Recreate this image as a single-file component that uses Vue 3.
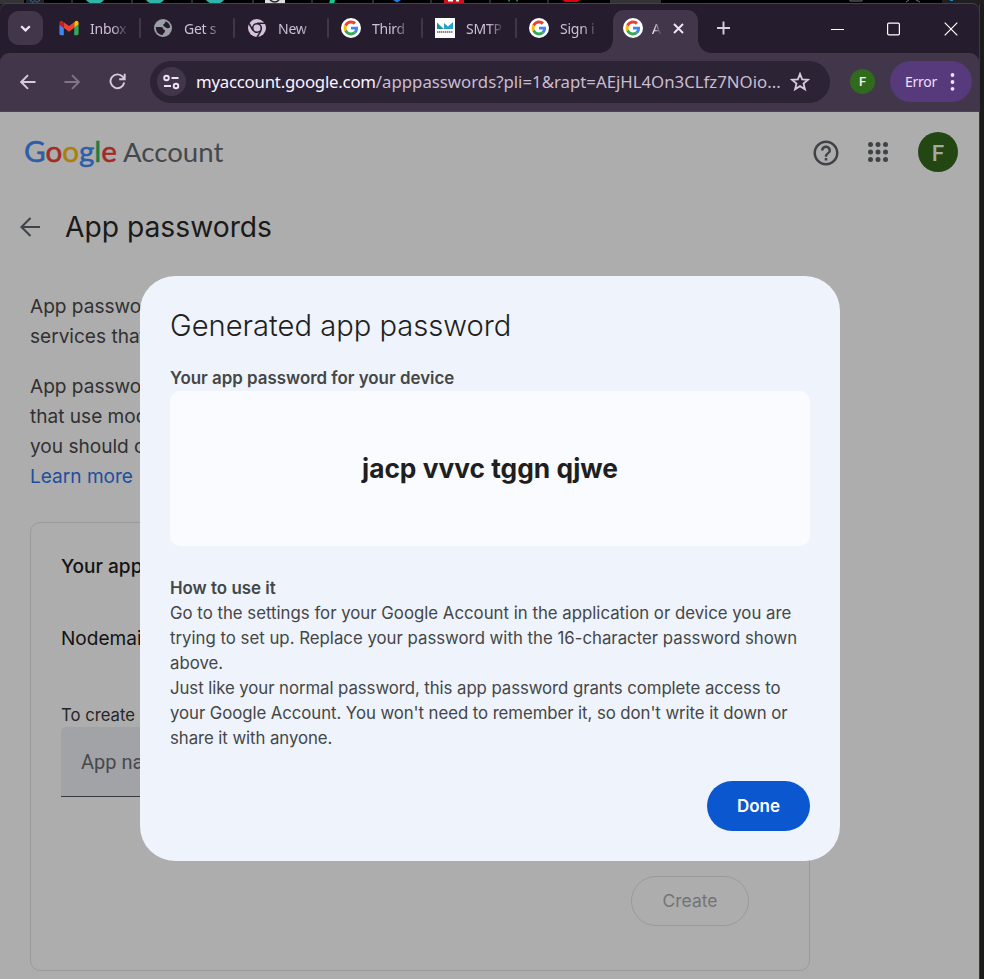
<script setup>
const tabs = [
  { icon: 'gmail', title: 'Inbox' },
  { icon: 'globe', title: 'Get s' },
  { icon: 'chrome', title: 'New' },
  { icon: 'google', title: 'Third' },
  { icon: 'nodemailer', title: 'SMTP' },
  { icon: 'google', title: 'Sign i' },
]
const spokes = [0, 120, 240]
const separators = [71, 131, 191, 252, 311, 372, 430, 489, 547]
const teal = [95, 155, 215]
const dots = [0, 1, 2, 3, 4, 5, 6, 7, 8]
const logo = [
  ['G', 'blue'], ['o', 'red'], ['o', 'yellow'], ['g', 'blue'], ['l', 'green'], ['e', 'red'],
]
</script>

<template>
  <div class="desktop">
    <svg class="behind" width="984" height="4" viewBox="0 0 984 4">
      <rect width="984" height="4" fill="#000" />
      <rect width="24" height="4" fill="#343434" />
      <rect x="26" width="18" height="4" fill="#20232a" />
      <path d="M30 0l3 2.500 2-2 2 2 3-2.500" stroke="#39768d" fill="none" />
      <rect v-for="x in separators" :key="x" :x="x" width="2" height="4" fill="#2b2b2b" />
      <path v-for="x in teal" :key="x" :d="`M${x - 9} 0h18q-3 4-9 4t-9-4z`" fill="#2fb5a8" />
      <rect x="265" width="20" height="4" fill="#ddd" />
      <path d="M270 0q5 4 9 0" stroke="#222" fill="none" stroke-width="1.500" />
      <path d="M330 0h5l-1 4h-5z" fill="#16c98d" />
      <path d="M393 0h8l-4 2.500z" fill="#1d7fe0" />
      <rect x="444" width="20" height="4" fill="#d0121b" />
      <rect x="448" width="5" height="1.500" fill="#fff" /><rect x="456" width="3" height="1.500" fill="#fff" />
      <rect x="508" width="2" height="1.500" fill="#167a4d" /><rect x="516" width="2" height="1.500" fill="#167a4d" />
      <path d="M562 0h18l-3 2h-12z" fill="#e3000b" />
      <rect x="610" width="51" height="4" fill="#343434" />
      <path d="M850 0v1h12v-1" stroke="#777" fill="none" />
      <path d="M906 2l3-2M916 0l4 2" stroke="#777" />
      <rect x="942" width="42" height="4" fill="#1f1f1f" />
      <rect x="950" width="3" height="1" fill="#2783c4" />
    </svg>

    <div class="body">
      <div class="window">
        <div class="tabstrip">
          <button class="tabsearch">
            <svg width="13" height="9" viewBox="0 0 13 9"><path d="M2.200 2.200l4.300 4.200 4.300-4.200" fill="none" stroke="#f0e6f5" stroke-width="2.200" /></svg>
          </button>
          <div v-for="(t, i) in tabs" :key="i" class="tab">
            <svg v-if="t.icon === 'gmail'" class="fav" viewBox="50 40 92 70">
              <path fill="#4285f4" d="M58 108h14V74L52 59v43c0 3.320 2.690 6 6 6" />
              <path fill="#34a853" d="M120 108h14c3.320 0 6-2.690 6-6V59l-20 15" />
              <path fill="#fbbc04" d="M120 48v26l20-15v-8c0-7.420-8.470-11.650-14.400-7.200" />
              <path fill="#ea4335" d="M72 74V48l24 18 24-18v26L96 92" />
              <path fill="#c5221f" d="M52 51v8l20 15V48l-5.600-4.200c-5.940-4.450-14.400-.220-14.400 7.200" />
            </svg>
            <svg v-else-if="t.icon === 'globe'" class="fav" viewBox="0 0 20 20">
              <circle cx="10" cy="10" r="9" fill="#9aa0a6" />
              <path fill="#251c2d" d="M12.500 3.200c2.600 1 4.400 3.200 4.700 6-1.500 1.300-3.400 1.400-4.400.300-.900-1-2.300-.800-2.500-2.300-.200-1.500 2.200-1.300 2.200-4zM2.900 9h4.800c2 0 2.700 1.300 2.700 2.600 1.600 0 2 .900 1.400 2.300-.500 1.200-1.900 1.200-2 3.100-4 .300-7.300-3.500-6.900-8z" />
            </svg>
            <svg v-else-if="t.icon === 'chrome'" class="fav" viewBox="0 0 20 20">
              <circle cx="10" cy="10" r="9" fill="#d5c3dc" />
              <g v-for="a in spokes" :key="a" :transform="`rotate(${a} 10 10)`">
                <path d="M10 5.300H18.500" stroke="#251c2d" stroke-width="1.500" />
              </g>
              <circle cx="10" cy="10" r="4.300" fill="#d5c3dc" stroke="#251c2d" stroke-width="1.600" />
            </svg>
            <svg v-else-if="t.icon === 'nodemailer'" class="fav" viewBox="0 0 20 20">
              <rect width="20" height="20" fill="#fff" />
              <path d="M2 4.500l7 6.500H2z" fill="#2aa58c" /><path d="M9 11V5l4 3.500L18 4v7z" fill="#2b9fd0" />
              <path d="M2 11V6l5 5z" fill="#1f8f9b" />
              <path d="M2 14h16" stroke="#666" stroke-width="1.300" stroke-dasharray="1.500 .500" />
            </svg>
            <svg v-else class="fav" viewBox="0 0 20 20">
              <circle cx="10" cy="10" r="10" fill="#fff" />
              <g transform="translate(2.600 2.600) scale(.308)">
                <path fill="#EA4335" d="M24 9.500c3.540 0 6.710 1.220 9.210 3.600l6.850-6.850C35.900 2.380 30.470 0 24 0 14.620 0 6.510 5.380 2.560 13.220l7.980 6.190C12.430 13.720 17.740 9.500 24 9.500z" />
                <path fill="#4285F4" d="M46.980 24.550c0-1.570-.15-3.090-.38-4.550H24v9.020h12.940c-.58 2.960-2.260 5.480-4.780 7.180l7.730 6c4.510-4.180 7.090-10.360 7.090-17.650z" />
                <path fill="#FBBC05" d="M10.530 28.590c-.48-1.450-.76-2.990-.76-4.590s.27-3.140.76-4.590l-7.980-6.190C.92 16.460 0 20.120 0 24c0 3.880.92 7.540 2.560 10.780l7.970-6.190z" />
                <path fill="#34A853" d="M24 48c6.480 0 11.930-2.130 15.890-5.810l-7.730-6c-2.150 1.450-4.920 2.300-8.160 2.300-6.260 0-11.570-4.220-13.470-9.910l-7.980 6.190C6.510 42.620 14.620 48 24 48z" />
              </g>
            </svg>
            <span class="tabtitle">{{ t.title }}</span>
          </div>
          <div class="tab active">
            <svg class="fav" viewBox="0 0 20 20">
              <circle cx="10" cy="10" r="10" fill="#fff" />
              <g transform="translate(2.600 2.600) scale(.308)">
                <path fill="#EA4335" d="M24 9.500c3.540 0 6.710 1.220 9.210 3.600l6.850-6.850C35.900 2.380 30.470 0 24 0 14.620 0 6.510 5.380 2.560 13.220l7.980 6.190C12.430 13.720 17.740 9.500 24 9.500z" />
                <path fill="#4285F4" d="M46.980 24.550c0-1.570-.15-3.090-.38-4.550H24v9.020h12.940c-.58 2.960-2.260 5.480-4.780 7.180l7.730 6c4.510-4.180 7.090-10.360 7.090-17.650z" />
                <path fill="#FBBC05" d="M10.530 28.590c-.48-1.450-.76-2.990-.76-4.590s.27-3.140.76-4.590l-7.980-6.190C.92 16.460 0 20.120 0 24c0 3.880.92 7.540 2.560 10.780l7.970-6.190z" />
                <path fill="#34A853" d="M24 48c6.480 0 11.930-2.130 15.890-5.810l-7.730-6c-2.150 1.450-4.920 2.300-8.160 2.300-6.260 0-11.570-4.220-13.470-9.910l-7.980 6.190C6.510 42.620 14.620 48 24 48z" />
              </g>
            </svg>
            <span class="tabtitle">A</span>
            <svg class="close" width="11" height="11" viewBox="0 0 11 11"><path d="M1 1l9 9M10 1L1 10" stroke="#f0e6f5" stroke-width="1.900" /></svg>
          </div>
          <svg class="plus" width="13" height="14" viewBox="0 0 13 14"><path d="M6.500 .500v13M0 7h13" stroke="#dccde2" stroke-width="1.900" /></svg>
          <div class="controls">
            <svg width="13" height="14" viewBox="0 0 13 14"><path d="M0 7.500h13" stroke="#fff" /></svg>
            <svg class="maximize" width="13" height="14" viewBox="0 0 13 14"><rect x=".6" y="1.100" width="11.800" height="11.800" rx="1.300" fill="none" stroke="#fff" stroke-width="1.200" /></svg>
            <svg width="14" height="14" viewBox="0 0 14 14"><path d="M.700.700l12.600 12.600M13.300.700L.700 13.300" stroke="#fff" stroke-width="1.200" /></svg>
          </div>
        </div>

        <div class="toolbar">
          <div class="nav">
            <svg width="16" height="16" viewBox="0 0 16 16"><path d="M15.500 8H1.700M8 1.200L1.200 8 8 14.800" fill="none" stroke="#d9cadf" stroke-width="1.900" /></svg>
            <svg width="16" height="16" viewBox="0 0 16 16"><path d="M.500 8h13.800M8 1.200L14.800 8 8 14.800" fill="none" stroke="#80738a" stroke-width="1.900" /></svg>
            <svg class="reload" width="17" height="17" viewBox="0 0 17 17"><path d="M15.200 9.500A6.900 6.900 0 1 1 13.600 3.700L15.500 6M15.700 .800V6.300H10.200" fill="none" stroke="#d9cadf" stroke-width="1.900" /></svg>
          </div>
          <div class="omnibox">
            <span class="site">
              <svg width="17" height="16" viewBox="0 0 17 16" fill="none" stroke="#efe4f4" stroke-width="1.900"><circle cx="3.500" cy="4" r="2.300" /><path d="M8.500 4H15.500M1 12H8" /><circle cx="13" cy="12" r="2.300" /></svg>
            </span>
            <span class="url"><span class="host">myaccount.google.com</span><span class="path">/apppasswords?pli=1&amp;rapt=AEjHL4On3CLfz7NOio...</span></span>
            <svg class="star" width="20" height="20" viewBox="0 0 20 20"><path d="M10 1.900l2.150 5.450 5.850.450-4.500 3.800 1.450 5.700L10 14.150 5.050 17.300l1.450-5.700L2 7.800l5.850-.450z" fill="none" stroke="#d9cadf" stroke-width="1.800" /></svg>
          </div>
          <span class="profile">F</span>
          <button class="error">Error
            <svg width="5" height="18" viewBox="0 0 5 18" fill="#f1dffc"><circle cx="2.500" cy="2" r="1.900" /><circle cx="2.500" cy="9" r="1.900" /><circle cx="2.500" cy="15.800" r="1.900" /></svg>
          </button>
        </div>

        <div class="page">
          <header class="gbar">
            <div class="logo">
              <span class="google"><span v-for="(l, i) in logo" :key="i" :class="l[1]">{{ l[0] }}</span></span>
              <span class="account">Account</span>
            </div>
            <svg class="help" width="30" height="30" viewBox="0 0 24 24" fill="#3f4246"><path d="M11 18h2v-2h-2v2zm1-16C6.480 2 2 6.480 2 12s4.480 10 10 10 10-4.480 10-10S17.520 2 12 2zm0 18c-4.410 0-8-3.590-8-8s3.590-8 8-8 8 3.590 8 8-3.590 8-8 8zm0-14c-2.210 0-4 1.790-4 4h2c0-1.100.900-2 2-2s2 .900 2 2c0 2-3 1.750-3 5h2c0-2.250 3-2.500 3-5 0-2.210-1.790-4-4-4z" /></svg>
            <svg class="apps" width="20" height="20" viewBox="0 0 20 20" fill="#3f4246"><circle v-for="d in dots" :key="d" :cx="2.500 + (d % 3) * 7.500" :cy="2.500 + Math.floor(d / 3) * 7.500" r="2.500" /></svg>
            <span class="avatar">F</span>
          </header>

          <div class="heading">
            <svg width="21" height="20" viewBox="0 0 21 20"><path d="M20 10H2M10.500 1L1.500 10l9 9" fill="none" stroke="#404347" stroke-width="2.100" /></svg>
            <h1>App passwords</h1>
          </div>

          <div class="content">
            <p>App passwor<br />services that</p>
            <p>App passwor<br />that use mod<br />you should c<br /><a>Learn more</a></p>
            <section class="card">
              <div class="apphead">Your app</div>
              <div class="appname">Nodemail</div>
              <div class="hint">To create a</div>
              <div class="field">App nam</div>
              <button class="create">Create</button>
            </section>
          </div>

          <div class="dialog">
            <h2>Generated app password</h2>
            <strong class="label">Your app password for your device</strong>
            <div class="password">jacp vvvc tggn qjwe</div>
            <strong class="label">How to use it</strong>
            <p>Go to the settings for your Google Account in the application or device you are<br />trying to set up. Replace your password with the 16-character password shown<br />above.</p>
            <p class="note">Just like your normal password, this app password grants complete access to<br />your Google Account. You won't need to remember it, so don't write it down or<br />share it with anyone.</p>
            <button class="done">Done</button>
          </div>
        </div>
      </div>
      <div class="edge"></div>
    </div>
  </div>
</template>

<style>
body { margin: 0; background: #1c1c1a; }
</style>

<style scoped>
* { box-sizing: border-box; }
button { border: 0; padding: 0; font: inherit; }
h1, h2, p { margin: 0; font-weight: 400; }
svg { flex: none; display: block; }
.desktop { width: 984px; height: 979px; overflow: hidden; background: #1b1b1a; display: flex; flex-direction: column; font-family: Inter, "Liberation Sans", sans-serif; }
.body { flex: 1; display: flex; min-height: 0; }
.window { width: 979px; display: flex; flex-direction: column; background: #251c2d; border-radius: 7px 7px 0 0; box-shadow: 0 -1px 0 #454049; font-family: "Noto Sans", sans-serif; }
.edge { width: 5px; border-left: 1px solid #3a3a39; background: #1b1b1a; }

.tabstrip { height: 49px; display: flex; padding: 6px 0 0 8px; }
.tabsearch { width: 35px; height: 34px; margin: 1px 4px 0 0; border-radius: 11px; background: #42374a; display: flex; align-items: center; justify-content: center; }
.tab { width: 94px; height: 36px; padding-left: 12px; display: flex; align-items: center; gap: 11px; position: relative; flex: none; }
.tab:not(.active)::after { content: ""; width: 2px; height: 20px; border-radius: 1px; background: #42374a; margin-left: auto; }
.tab:nth-child(7)::after { visibility: hidden; }
.fav { width: 20px; height: 20px; }
.tabtitle { width: 38px; margin-right: -11px; overflow: hidden; white-space: nowrap; font-size: 14px; letter-spacing: -0.250px; color: #cdbfd5; mask-image: linear-gradient(90deg, #000 60%, rgba(0, 0, 0, .15) 96%); }
.active { width: 85px; height: 43px; margin-left: 2px; padding: 0 0 7px 10px; background: #42374a; border-radius: 11px 11px 0 0; gap: 9px; }
.active .tabtitle { width: 9px; color: #efe4f4; margin-right: 3px; mask-image: linear-gradient(90deg, #000 20%, rgba(0, 0, 0, .2) 80%); }
.active::before, .active::after { content: ""; position: absolute; bottom: 0; width: 13px; height: 13px; }
.active::before { left: -13px; background: radial-gradient(circle at 0 0, transparent 12.500px, #42374a 13px); }
.active::after { right: -13px; background: radial-gradient(circle at 100% 0, transparent 12.500px, #42374a 13px); }
.plus { margin: 11px 0 0 19px; }
.controls { margin-left: auto; padding: 12px 21px 0 0; display: flex; gap: 43px; }
.maximize { margin-right: 1px; }

.toolbar { height: 59px; background: #42374a; border-radius: 9px 9px 0 0; border-bottom: 1px solid #4e4356; display: flex; align-items: center; padding: 0 7px 1px 20px; }
.nav { display: flex; align-items: center; gap: 28px; width: 130px; }
.reload { margin-left: 1px; }
.omnibox { width: 680px; height: 42px; border-radius: 21px; background: #2c2335; display: flex; align-items: center; padding: 0 20px 0 7px; }
.site { width: 29px; height: 29px; border-radius: 50%; background: #42374a; display: flex; align-items: center; justify-content: center; margin-right: 10px; }
.url { white-space: nowrap; font-size: 16.800px; line-height: 24px; width: 594px; padding-top: 1px; }
.host { color: #fbf4ff; letter-spacing: -0.230px; }
.path { color: #c9bdd0; }
.profile { width: 25px; height: 25px; margin-left: 20px; border-radius: 50%; background: #306a1d; color: #eef3ec; font-family: Roboto, sans-serif; font-size: 13px; font-weight: 500; display: flex; align-items: center; justify-content: center; }
.error { width: 82px; height: 41px; margin-left: auto; border-radius: 21px; background: #573a7b; color: #f1dffc; font-size: 14px; letter-spacing: -0.250px; display: flex; align-items: center; padding-left: 15px; gap: 13px; }

.page { flex: 1; min-height: 0; background: #adadad; position: relative; font-family: Inter, sans-serif; display: flex; flex-direction: column; }
.gbar { height: 80px; padding: 0 21px 0 24px; display: flex; align-items: center; }
.logo { display: flex; align-items: baseline; font-family: Lato, sans-serif; line-height: 40px; margin-right: auto; padding-bottom: 1px; }
.google { font-size: 29.600px; width: 99px; -webkit-text-stroke: .5px currentColor; white-space: nowrap; }
.account { font-size: 27.600px; color: #45484c; }
.blue { color: #2d5ca8; }
.red { color: #a02c25; }
.yellow { color: #ab8008; }
.green { color: #237b39; }
.help { margin: 1px 27px 0 0; }
.apps { margin-right: 30px; }
.avatar { width: 40px; height: 40px; border-radius: 50%; background: #224713; color: #a3aaa1; font-family: Roboto, sans-serif; font-size: 22.500px; font-weight: 500; line-height: 42px; text-align: center; }
.heading { display: flex; align-items: center; gap: 24px; height: 40px; margin: 15px 0 0 20px; }
.heading h1 { font-size: 28.220px; line-height: 40px; color: #1a1a1a; }
.content { margin: 45px 0 0 30px; width: 780px; font-size: 19.070px; line-height: 30px; color: #303132; }
.content p { margin-bottom: 20px; }
.content a { color: #1c4f9f; }
.card { height: 449px; margin-top: 30px; border: 1px solid #999a9a; border-radius: 10px; padding: 29px 30px 0; display: flex; flex-direction: column; color: #131314; }
.apphead { font-weight: 500; }
.appname { margin-top: 42px; }
.hint { margin-top: 49px; height: 24px; font-size: 16.690px; line-height: 25px; color: #252627; }
.field { height: 70px; background: #a2a3a6; border-bottom: 1px solid #37393c; border-radius: 5px 5px 0 0; padding-left: 20px; font-family: Roboto, sans-serif; font-size: 20px; line-height: 70px; color: #47494c; }
.create { align-self: flex-end; width: 118px; height: 50px; margin: 79px 30px 0 0; border: 1px solid #999a9a; border-radius: 25px; background: none; color: #737475; font-size: 17.500px; }
.dialog { position: absolute; left: 140px; top: 164px; width: 700px; height: 585px; border-radius: 35px; background: #eef3fc; padding: 30px; display: flex; flex-direction: column; color: #444746; font-size: 16.800px; line-height: 25px; white-space: nowrap; }
.dialog h2 { font-size: 29.150px; line-height: 40px; font-weight: 320; color: #1f1f1f; margin-bottom: 20px; }
.label { font-size: 16.900px; font-weight: 600; }
.password { height: 155px; margin-bottom: 30px; border-radius: 10px; background: #f9fbff; color: #1f1f1f; font-size: 26.300px; font-weight: 700; display: flex; align-items: center; justify-content: center; }
.note { letter-spacing: -0.070px; }
.done { align-self: flex-end; width: 103px; height: 50px; margin-top: 30px; border-radius: 25px; background: #0b57d0; color: #fff; font-size: 17px; font-weight: 600; }
</style>
